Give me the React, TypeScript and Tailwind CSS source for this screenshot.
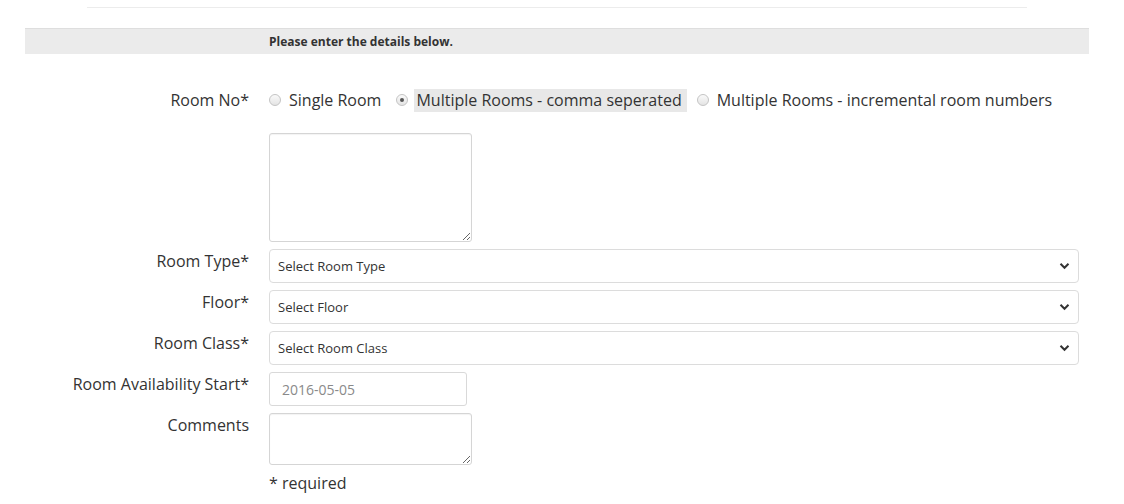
import React, { useState } from 'react';

function Radio({ checked }: { checked: boolean }) {
  return (
    <span className="w-[12px] h-[12px] rounded-full border border-[#c4c4c4] bg-gradient-to-b from-[#fafafa] to-[#e4e4e4] flex items-center justify-center shrink-0">
      {checked && <span className="w-[4px] h-[4px] rounded-full bg-[#555]" />}
    </span>
  );
}

function Chevron() {
  return (
    <svg width="11" height="8" viewBox="0 0 11 8" className="shrink-0">
      <path d="M1.5 1.8 L5.5 5.8 L9.5 1.8" fill="none" stroke="#333" strokeWidth="2" />
    </svg>
  );
}

function SelectBox({ label }: { label: string }) {
  return (
    <div className="relative w-[810px] h-[34px]">
      <select className="appearance-none w-full h-full rounded-[4px] border border-[#dcdcdc] bg-white pl-[8px] pt-[1px] text-[13px] text-[#333] outline-none">
        <option>{label}</option>
      </select>
      <span className="absolute right-[9px] top-[13px] pointer-events-none flex">
        <Chevron />
      </span>
    </div>
  );
}

function Row({ label, children }: { label: string; children: React.ReactNode }) {
  return (
    <div className="flex">
      <div className="w-[249px] text-right text-[16px] leading-[24px] text-[#333]">{label}</div>
      <div className="ml-[20px]">{children}</div>
    </div>
  );
}

export default function App() {
  const [mode, setMode] = useState("multi");
  const options = [
    { id: "single", text: "Single Room" },
    { id: "multi", text: "Multiple Rooms - comma seperated" },
    { id: "inc", text: "Multiple Rooms - incremental room numbers" },
  ];
  return (
    <div className="w-[1124px] h-[504px] bg-white overflow-hidden" style={{ fontFamily: '"Open Sans", "Liberation Sans", sans-serif' }}>
      <div className="pt-[7px]">
        <div className="ml-[87px] w-[940px] border-t border-[#ececec]" />
      </div>
      <div className="mt-[20px] ml-[25px] w-[1064px] h-[26px] bg-[#ebebeb] border-t border-[#dedede] flex items-center pl-[244px]">
        <span className="text-[12px] font-bold text-[#333]">Please enter the details below.</span>
      </div>

      <div className="mt-[34px] flex flex-col">
        <Row label="Room No*">
          <div className="flex items-center h-[24px] text-[16px] text-[#333]">
            {options.map((o) => (
              <label
                key={o.id}
                onClick={() => setMode(o.id)}
                className="flex items-center mr-[10px] cursor-pointer"
              >
                <Radio checked={mode === o.id} />
                <span className={"ml-[6px] pl-[2px] pr-[5px] leading-[23px] mt-[1px] " + (mode === o.id ? "bg-[#e8e8e8]" : "")}>
                  {o.text}
                </span>
              </label>
            ))}
          </div>
        </Row>

        <div className="mt-[21px] ml-[269px]">
          <textarea className="block w-[203px] h-[109px] rounded-[3px] border border-[#d5d5d5] shadow-[inset_0_1px_1px_rgba(0,0,0,0.05)] outline-none" />
        </div>

        <div className="mt-[7px] flex flex-col gap-[7px]">
          <Row label="Room Type*"><SelectBox label="Select Room Type" /></Row>
          <Row label="Floor*"><SelectBox label="Select Floor" /></Row>
          <Row label="Room Class*"><SelectBox label="Select Room Class" /></Row>
          <Row label="Room Availability Start*">
            <input
              className="block w-[198px] h-[34px] rounded-[3px] border border-[#d9d9d9] px-[12px] text-[14px] text-[#333] placeholder:text-[#8a8a8a] outline-none"
              placeholder="2016-05-05"
            />
          </Row>
          <Row label="Comments">
            <textarea className="block w-[203px] h-[52px] rounded-[3px] border border-[#d5d5d5] shadow-[inset_0_1px_1px_rgba(0,0,0,0.05)] outline-none" />
          </Row>
        </div>

        <div className="mt-[6px] ml-[269px] text-[16px] leading-[24px] text-[#333]">* required</div>
      </div>
    </div>
  );
}
